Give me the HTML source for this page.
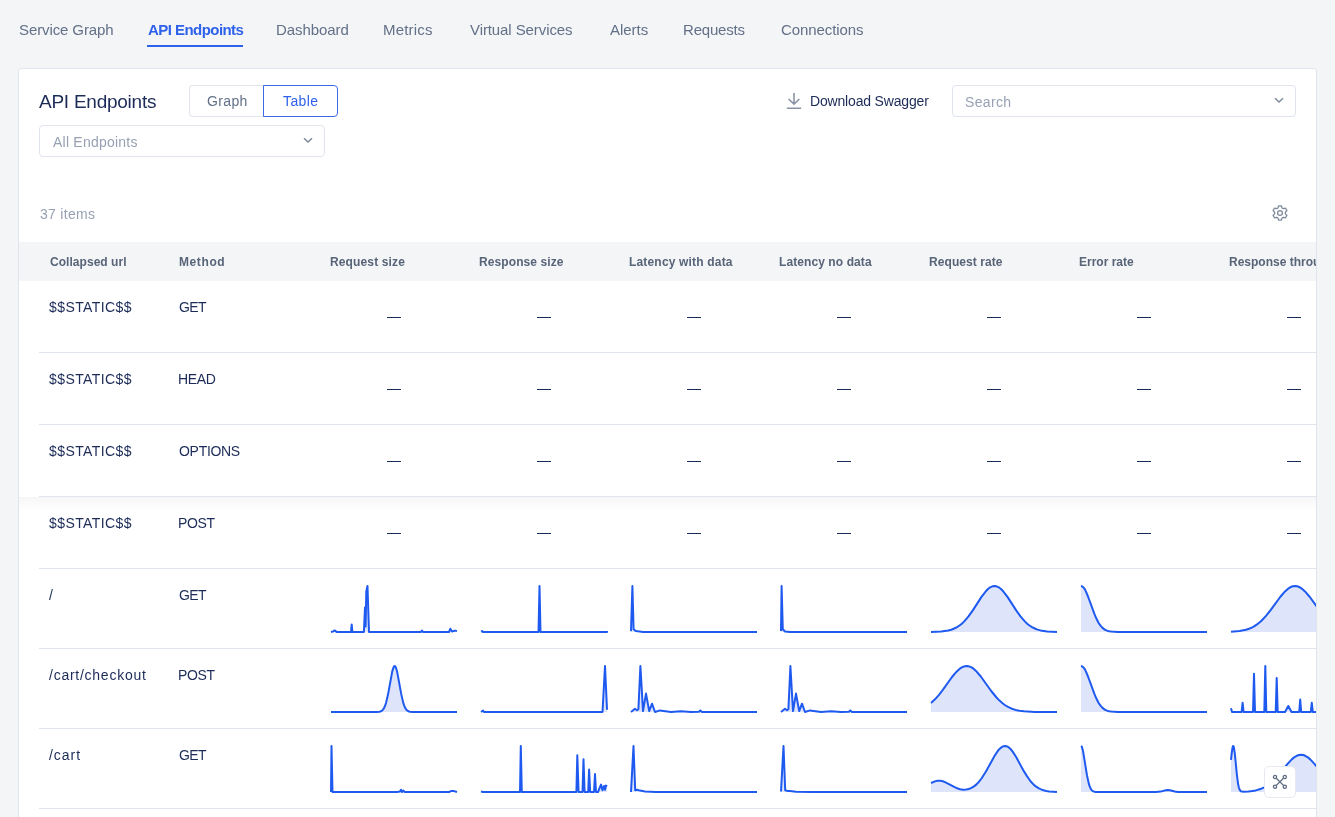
<!DOCTYPE html>
<html><head><meta charset="utf-8"><style>
html,body{margin:0;padding:0;}
body{width:1335px;height:817px;overflow:hidden;background:#f4f5f7;position:relative;font-family:"Liberation Sans", sans-serif;}
.t{position:absolute;white-space:nowrap;will-change:transform;}
.f{fill:#dee5fb;}
.s{fill:none;stroke:#1f5af0;stroke-width:2;stroke-linejoin:round;stroke-linecap:butt;}
</style></head><body>
<div class="t" style="left:19.30px;top:21.10px;font-size:15px;line-height:18px;color:#627088;font-weight:400;letter-spacing:-0.108px;">Service Graph</div>
<div class="t" style="left:147.60px;top:21.10px;font-size:15px;line-height:18px;color:#2f62ea;font-weight:700;letter-spacing:-0.550px;">API Endpoints</div>
<div class="t" style="left:275.80px;top:21.10px;font-size:15px;line-height:18px;color:#627088;font-weight:400;letter-spacing:-0.075px;">Dashboard</div>
<div class="t" style="left:382.90px;top:21.10px;font-size:15px;line-height:18px;color:#627088;font-weight:400;letter-spacing:0.200px;">Metrics</div>
<div class="t" style="left:469.70px;top:21.10px;font-size:15px;line-height:18px;color:#627088;font-weight:400;letter-spacing:-0.093px;">Virtual Services</div>
<div class="t" style="left:610.00px;top:21.10px;font-size:15px;line-height:18px;color:#627088;font-weight:400;letter-spacing:-0.040px;">Alerts</div>
<div class="t" style="left:682.80px;top:21.10px;font-size:15px;line-height:18px;color:#627088;font-weight:400;letter-spacing:-0.200px;">Requests</div>
<div class="t" style="left:780.90px;top:21.10px;font-size:15px;line-height:18px;color:#627088;font-weight:400;letter-spacing:-0.080px;">Connections</div>
<div style="position:absolute;left:147px;top:45px;width:96px;height:2px;background:#2f62ea"></div>
<div style="position:absolute;left:18px;top:68px;width:1297px;height:800px;border:1px solid #e0e4ed;border-radius:3px;background:#fff"></div>
<div class="t" style="left:39.40px;top:90.31px;font-size:19px;line-height:23px;color:#1c2b57;font-weight:400;letter-spacing:-0.250px;">API Endpoints</div>
<div style="position:absolute;left:189px;top:85px;width:74px;height:30px;border:1px solid #e0e4ed;border-right:none;border-radius:4px 0 0 4px;background:#fff"></div>
<div style="position:absolute;left:263px;top:85px;width:73px;height:30px;border:1px solid #3a6ae8;border-radius:0 4px 4px 0;background:#fff"></div>
<div class="t" style="left:206.60px;top:92.65px;font-size:14px;line-height:17px;color:#627088;font-weight:400;letter-spacing:0.375px;">Graph</div>
<div class="t" style="left:283.00px;top:92.65px;font-size:14px;line-height:17px;color:#2f62ea;font-weight:400;letter-spacing:0.375px;">Table</div>
<div style="position:absolute;left:39px;top:125px;width:284px;height:30px;border:1px solid #e0e4ed;border-radius:4px;background:#fff"></div>
<div class="t" style="left:52.60px;top:133.65px;font-size:14px;line-height:17px;color:#97a1b3;font-weight:400;letter-spacing:0.225px;">All Endpoints</div>
<svg style="position:absolute;left:303px;top:137px" width="10" height="7" viewBox="0 0 10 7"><path d="M1 1.2 L5 5 L9 1.2" fill="none" stroke="#7f8a9c" stroke-width="1.5"/></svg>
<svg style="position:absolute;left:784px;top:90px" width="20" height="20" viewBox="0 0 20 20"><path d="M10 3 V14.2 M4.6 9 L10 14.2 L15.4 9 M2.8 18.2 H17.2" fill="none" stroke="#8a94a6" stroke-width="1.6"/></svg>
<div class="t" style="left:809.50px;top:92.65px;font-size:14px;line-height:17px;color:#1c2b57;font-weight:400;letter-spacing:-0.173px;">Download Swagger</div>
<div style="position:absolute;left:952px;top:85px;width:342px;height:30px;border:1px solid #e0e4ed;border-radius:4px;background:#fff"></div>
<div class="t" style="left:965.20px;top:93.65px;font-size:14px;line-height:17px;color:#97a1b3;font-weight:400;letter-spacing:0.340px;">Search</div>
<svg style="position:absolute;left:1274px;top:97px" width="10" height="7" viewBox="0 0 10 7"><path d="M1 1.2 L5 5 L9 1.2" fill="none" stroke="#7f8a9c" stroke-width="1.5"/></svg>
<div class="t" style="left:40.00px;top:205.65px;font-size:14px;line-height:17px;color:#97a1b3;font-weight:400;letter-spacing:0.286px;">37 items</div>
<svg style="position:absolute;left:1270px;top:203px" width="20" height="20" viewBox="1270 203 20 20"><path d="M1278.61 205.83 L1281.39 205.83 L1282.02 207.99 L1283.32 208.74 L1285.51 208.21 L1286.90 210.62 L1285.35 212.25 L1285.35 213.75 L1286.90 215.38 L1285.51 217.79 L1283.32 217.26 L1282.02 218.01 L1281.39 220.17 L1278.61 220.17 L1277.98 218.01 L1276.68 217.26 L1274.49 217.79 L1273.10 215.38 L1274.65 213.75 L1274.65 212.25 L1273.10 210.62 L1274.49 208.21 L1276.68 208.74 L1277.98 207.99 Z" fill="none" stroke="#7f8a9c" stroke-width="1.3" stroke-linejoin="round"/><circle cx="1280" cy="213" r="2.4" fill="none" stroke="#7f8a9c" stroke-width="1.3"/></svg>
<div style="position:absolute;left:19px;top:242px;width:1297px;height:39px;background:#f4f5f7"></div>
<div style="position:absolute;left:0;top:0;width:1316px;height:300px;overflow:hidden">
<div class="t" style="left:49.70px;top:254.84px;font-size:12px;line-height:14px;color:#586478;font-weight:700;letter-spacing:0.042px;">Collapsed url</div>
<div class="t" style="left:179.20px;top:254.84px;font-size:12px;line-height:14px;color:#586478;font-weight:700;letter-spacing:0.600px;">Method</div>
<div class="t" style="left:329.50px;top:254.84px;font-size:12px;line-height:14px;color:#586478;font-weight:700;letter-spacing:0.136px;">Request size</div>
<div class="t" style="left:479.10px;top:254.84px;font-size:12px;line-height:14px;color:#586478;font-weight:700;letter-spacing:0.092px;">Response size</div>
<div class="t" style="left:629.40px;top:254.84px;font-size:12px;line-height:14px;color:#586478;font-weight:700;letter-spacing:0.175px;">Latency with data</div>
<div class="t" style="left:779.10px;top:254.84px;font-size:12px;line-height:14px;color:#586478;font-weight:700;letter-spacing:0.086px;">Latency no data</div>
<div class="t" style="left:929.40px;top:254.84px;font-size:12px;line-height:14px;color:#586478;font-weight:700;letter-spacing:0.073px;">Request rate</div>
<div class="t" style="left:1079.20px;top:254.84px;font-size:12px;line-height:14px;color:#586478;font-weight:700;">Error rate</div>
<div class="t" style="left:1229.30px;top:254.84px;font-size:12px;line-height:14px;color:#586478;font-weight:700;">Response throughput</div>
</div>
<div class="t" style="left:49.00px;top:298.65px;font-size:14px;line-height:17px;color:#1c2b57;font-weight:400;letter-spacing:0.411px;">$$STATIC$$</div>
<div class="t" style="left:179.20px;top:298.65px;font-size:14px;line-height:17px;color:#1c2b57;font-weight:400;letter-spacing:-0.600px;">GET</div>
<div style="position:absolute;left:39px;top:352px;width:1277px;height:1px;background:#e0e4ed"></div>
<div class="t" style="left:49.00px;top:370.65px;font-size:14px;line-height:17px;color:#1c2b57;font-weight:400;letter-spacing:0.411px;">$$STATIC$$</div>
<div class="t" style="left:178.20px;top:370.65px;font-size:14px;line-height:17px;color:#1c2b57;font-weight:400;letter-spacing:-0.333px;">HEAD</div>
<div style="position:absolute;left:39px;top:424px;width:1277px;height:1px;background:#e0e4ed"></div>
<div class="t" style="left:49.00px;top:442.65px;font-size:14px;line-height:17px;color:#1c2b57;font-weight:400;letter-spacing:0.411px;">$$STATIC$$</div>
<div class="t" style="left:179.20px;top:442.65px;font-size:14px;line-height:17px;color:#1c2b57;font-weight:400;letter-spacing:-0.300px;">OPTIONS</div>
<div style="position:absolute;left:39px;top:496px;width:1277px;height:1px;background:#e0e4ed"></div>
<div class="t" style="left:49.00px;top:514.65px;font-size:14px;line-height:17px;color:#1c2b57;font-weight:400;letter-spacing:0.411px;">$$STATIC$$</div>
<div class="t" style="left:178.20px;top:514.65px;font-size:14px;line-height:17px;color:#1c2b57;font-weight:400;letter-spacing:-0.333px;">POST</div>
<div style="position:absolute;left:39px;top:568px;width:1277px;height:1px;background:#e0e4ed"></div>
<div class="t" style="left:49.00px;top:586.65px;font-size:14px;line-height:17px;color:#1c2b57;font-weight:400;">/</div>
<div class="t" style="left:179.20px;top:586.65px;font-size:14px;line-height:17px;color:#1c2b57;font-weight:400;letter-spacing:-0.600px;">GET</div>
<div style="position:absolute;left:39px;top:648px;width:1277px;height:1px;background:#e0e4ed"></div>
<div class="t" style="left:49.00px;top:666.65px;font-size:14px;line-height:17px;color:#1c2b57;font-weight:400;letter-spacing:0.746px;">/cart/checkout</div>
<div class="t" style="left:178.20px;top:666.65px;font-size:14px;line-height:17px;color:#1c2b57;font-weight:400;letter-spacing:-0.333px;">POST</div>
<div style="position:absolute;left:39px;top:728px;width:1277px;height:1px;background:#e0e4ed"></div>
<div class="t" style="left:49.00px;top:746.65px;font-size:14px;line-height:17px;color:#1c2b57;font-weight:400;letter-spacing:0.950px;">/cart</div>
<div class="t" style="left:179.20px;top:746.65px;font-size:14px;line-height:17px;color:#1c2b57;font-weight:400;letter-spacing:-0.600px;">GET</div>
<div style="position:absolute;left:39px;top:808px;width:1277px;height:1px;background:#e0e4ed"></div>
<div style="position:absolute;left:19px;top:497px;width:1297px;height:14px;background:linear-gradient(rgba(0,0,0,0.035),rgba(0,0,0,0))"></div>
<div style="position:absolute;left:387px;top:316.9px;width:14px;height:1.2px;background:#1b2b58"></div>
<div style="position:absolute;left:537px;top:316.9px;width:14px;height:1.2px;background:#1b2b58"></div>
<div style="position:absolute;left:687px;top:316.9px;width:14px;height:1.2px;background:#1b2b58"></div>
<div style="position:absolute;left:837px;top:316.9px;width:14px;height:1.2px;background:#1b2b58"></div>
<div style="position:absolute;left:987px;top:316.9px;width:14px;height:1.2px;background:#1b2b58"></div>
<div style="position:absolute;left:1137px;top:316.9px;width:14px;height:1.2px;background:#1b2b58"></div>
<div style="position:absolute;left:1287px;top:316.9px;width:14px;height:1.2px;background:#1b2b58"></div>
<div style="position:absolute;left:387px;top:388.9px;width:14px;height:1.2px;background:#1b2b58"></div>
<div style="position:absolute;left:537px;top:388.9px;width:14px;height:1.2px;background:#1b2b58"></div>
<div style="position:absolute;left:687px;top:388.9px;width:14px;height:1.2px;background:#1b2b58"></div>
<div style="position:absolute;left:837px;top:388.9px;width:14px;height:1.2px;background:#1b2b58"></div>
<div style="position:absolute;left:987px;top:388.9px;width:14px;height:1.2px;background:#1b2b58"></div>
<div style="position:absolute;left:1137px;top:388.9px;width:14px;height:1.2px;background:#1b2b58"></div>
<div style="position:absolute;left:1287px;top:388.9px;width:14px;height:1.2px;background:#1b2b58"></div>
<div style="position:absolute;left:387px;top:460.9px;width:14px;height:1.2px;background:#1b2b58"></div>
<div style="position:absolute;left:537px;top:460.9px;width:14px;height:1.2px;background:#1b2b58"></div>
<div style="position:absolute;left:687px;top:460.9px;width:14px;height:1.2px;background:#1b2b58"></div>
<div style="position:absolute;left:837px;top:460.9px;width:14px;height:1.2px;background:#1b2b58"></div>
<div style="position:absolute;left:987px;top:460.9px;width:14px;height:1.2px;background:#1b2b58"></div>
<div style="position:absolute;left:1137px;top:460.9px;width:14px;height:1.2px;background:#1b2b58"></div>
<div style="position:absolute;left:1287px;top:460.9px;width:14px;height:1.2px;background:#1b2b58"></div>
<div style="position:absolute;left:387px;top:532.9px;width:14px;height:1.2px;background:#1b2b58"></div>
<div style="position:absolute;left:537px;top:532.9px;width:14px;height:1.2px;background:#1b2b58"></div>
<div style="position:absolute;left:687px;top:532.9px;width:14px;height:1.2px;background:#1b2b58"></div>
<div style="position:absolute;left:837px;top:532.9px;width:14px;height:1.2px;background:#1b2b58"></div>
<div style="position:absolute;left:987px;top:532.9px;width:14px;height:1.2px;background:#1b2b58"></div>
<div style="position:absolute;left:1137px;top:532.9px;width:14px;height:1.2px;background:#1b2b58"></div>
<div style="position:absolute;left:1287px;top:532.9px;width:14px;height:1.2px;background:#1b2b58"></div>
<svg style="position:absolute;left:0;top:0" width="1316" height="817" viewBox="0 0 1316 817"><path d="M331.0 632.0L333.0 631.5L334.6 630.4L336.0 631.5L337.0 632.0L351.0 632.0L351.7 624.4L352.4 632.0L363.9 632.0L365.0 607.6L365.6 626.5L366.3 591.5L367.5 586.0L368.3 611.3L369.0 632.0L421.0 632.0L422.0 630.6L423.0 632.0L449.0 632.0L450.3 628.8L452.0 631.5L455.0 630.6L457.0 631.1L457.0 632.0L331.0 632.0Z" class="f"/><path d="M331.0 632.0L333.0 631.5L334.6 630.4L336.0 631.5L337.0 632.0L351.0 632.0L351.7 624.4L352.4 632.0L363.9 632.0L365.0 607.6L365.6 626.5L366.3 591.5L367.5 586.0L368.3 611.3L369.0 632.0L421.0 632.0L422.0 630.6L423.0 632.0L449.0 632.0L450.3 628.8L452.0 631.5L455.0 630.6L457.0 631.1" class="s"/><path d="M481.0 631.5L482.0 631.1L483.0 632.0L538.5 632.0L539.5 586.0L540.5 632.0L607.0 632.0L607.0 631.1L607.0 632.0L481.0 632.0Z" class="f"/><path d="M481.0 631.5L482.0 631.1L483.0 632.0L538.5 632.0L539.5 586.0L540.5 632.0L607.0 632.0L607.0 631.1" class="s"/><path d="M631.0 631.1L632.4 586.0L633.6 629.2L636.0 631.1L643.0 632.0L757.0 632.0L757.0 632.0L631.0 632.0Z" class="f"/><path d="M631.0 631.1L632.4 586.0L633.6 629.2L636.0 631.1L643.0 632.0L757.0 632.0" class="s"/><path d="M781.0 631.1L781.6 586.0L782.8 629.2L785.0 631.5L790.0 632.0L907.0 632.0L907.0 632.0L781.0 632.0Z" class="f"/><path d="M781.0 631.1L781.6 586.0L782.8 629.2L785.0 631.5L790.0 632.0L907.0 632.0" class="s"/><path d="M931.0 631.9L941.2 631.5L948.2 630.5L951.2 629.7L954.2 628.5L957.0 627.1L959.5 625.5L961.8 623.7L964.0 621.6L968.5 616.4L972.8 610.4L981.5 596.9L985.8 591.3L988.0 589.0L990.2 587.3L992.5 586.3L994.5 586.0L996.5 586.3L998.8 587.3L1001.0 589.0L1003.2 591.3L1007.5 596.9L1016.2 610.4L1020.5 616.4L1025.0 621.6L1027.2 623.7L1029.5 625.5L1032.0 627.1L1034.8 628.5L1037.5 629.6L1040.5 630.4L1047.2 631.5L1057.0 631.9L1057.0 632.0L931.0 632.0Z" class="f"/><path d="M931.0 631.9L941.2 631.5L948.2 630.5L951.2 629.7L954.2 628.5L957.0 627.1L959.5 625.5L961.8 623.7L964.0 621.6L968.5 616.4L972.8 610.4L981.5 596.9L985.8 591.3L988.0 589.0L990.2 587.3L992.5 586.3L994.5 586.0L996.5 586.3L998.8 587.3L1001.0 589.0L1003.2 591.3L1007.5 596.9L1016.2 610.4L1020.5 616.4L1025.0 621.6L1027.2 623.7L1029.5 625.5L1032.0 627.1L1034.8 628.5L1037.5 629.6L1040.5 630.4L1047.2 631.5L1057.0 631.9" class="s"/><path d="M1081.0 586.0L1082.2 586.4L1083.5 587.5L1084.8 589.2L1086.0 591.6L1088.2 597.0L1094.5 614.2L1096.5 618.8L1098.5 622.7L1100.5 625.6L1102.5 627.9L1104.8 629.6L1107.0 630.6L1109.0 631.2L1111.2 631.6L1118.0 632.0L1207.0 632.0L1207.0 632.0L1081.0 632.0Z" class="f"/><path d="M1081.0 586.0L1082.2 586.4L1083.5 587.5L1084.8 589.2L1086.0 591.6L1088.2 597.0L1094.5 614.2L1096.5 618.8L1098.5 622.7L1100.5 625.6L1102.5 627.9L1104.8 629.6L1107.0 630.6L1109.0 631.2L1111.2 631.6L1118.0 632.0L1207.0 632.0" class="s"/><path d="M1231.0 631.7L1239.5 631.0L1246.0 629.7L1249.0 628.7L1251.8 627.6L1254.5 626.1L1257.0 624.4L1261.5 620.7L1266.2 615.6L1270.8 609.9L1280.2 597.0L1285.0 591.4L1287.8 588.9L1290.2 587.3L1292.8 586.3L1295.0 586.0L1297.2 586.3L1299.8 587.3L1302.2 588.9L1305.0 591.4L1309.8 597.0L1319.2 609.9L1323.5 615.3L1328.2 620.4L1332.8 624.3L1335.2 625.9L1337.8 627.3L1340.5 628.5L1343.2 629.5L1349.5 630.9L1357.0 631.6L1357.0 632.0L1231.0 632.0Z" class="f"/><path d="M1231.0 631.7L1239.5 631.0L1246.0 629.7L1249.0 628.7L1251.8 627.6L1254.5 626.1L1257.0 624.4L1261.5 620.7L1266.2 615.6L1270.8 609.9L1280.2 597.0L1285.0 591.4L1287.8 588.9L1290.2 587.3L1292.8 586.3L1295.0 586.0L1297.2 586.3L1299.8 587.3L1302.2 588.9L1305.0 591.4L1309.8 597.0L1319.2 609.9L1323.5 615.3L1328.2 620.4L1332.8 624.3L1335.2 625.9L1337.8 627.3L1340.5 628.5L1343.2 629.5L1349.5 630.9L1357.0 631.6" class="s"/><path d="M331.0 712.0L376.2 712.0L379.5 711.7L380.8 711.3L381.8 710.8L383.0 709.6L384.0 708.2L385.0 706.0L386.0 703.1L388.0 694.6L392.2 671.6L393.5 667.4L394.2 666.2L394.8 666.0L395.2 666.3L396.0 667.7L397.2 672.1L401.2 693.9L403.2 702.6L404.2 705.6L405.2 707.9L406.2 709.5L407.5 710.7L408.5 711.3L409.8 711.7L413.0 712.0L457.0 712.0L457.0 712.0L331.0 712.0Z" class="f"/><path d="M331.0 712.0L376.2 712.0L379.5 711.7L380.8 711.3L381.8 710.8L383.0 709.6L384.0 708.2L385.0 706.0L386.0 703.1L388.0 694.6L392.2 671.6L393.5 667.4L394.2 666.2L394.8 666.0L395.2 666.3L396.0 667.7L397.2 672.1L401.2 693.9L403.2 702.6L404.2 705.6L405.2 707.9L406.2 709.5L407.5 710.7L408.5 711.3L409.8 711.7L413.0 712.0L457.0 712.0" class="s"/><path d="M481.0 712.0L483.0 710.6L484.0 712.0L602.5 712.0L605.0 666.0L607.0 709.7L607.0 712.0L481.0 712.0Z" class="f"/><path d="M481.0 712.0L483.0 710.6L484.0 712.0L602.5 712.0L605.0 666.0L607.0 709.7" class="s"/><path d="M631.0 712.0L635.0 708.8L637.0 710.2L638.4 709.2L640.4 666.0L643.0 711.1L646.0 693.6L649.2 711.1L652.0 703.7L655.0 712.0L660.0 710.4L671.0 712.0L681.0 711.3L691.0 712.0L699.0 711.8L700.3 710.4L702.0 712.0L757.0 712.0L757.0 712.0L631.0 712.0Z" class="f"/><path d="M631.0 712.0L635.0 708.8L637.0 710.2L638.4 709.2L640.4 666.0L643.0 711.1L646.0 693.6L649.2 711.1L652.0 703.7L655.0 712.0L660.0 710.4L671.0 712.0L681.0 711.3L691.0 712.0L699.0 711.8L700.3 710.4L702.0 712.0L757.0 712.0" class="s"/><path d="M781.0 712.0L785.0 708.8L787.0 710.2L788.4 709.2L790.4 666.0L793.0 711.1L796.0 693.6L799.2 711.1L802.0 703.7L805.0 712.0L810.0 710.4L821.0 712.0L831.0 711.3L841.0 712.0L849.0 711.8L850.3 710.4L852.0 712.0L907.0 712.0L907.0 712.0L781.0 712.0Z" class="f"/><path d="M781.0 712.0L785.0 708.8L787.0 710.2L788.4 709.2L790.4 666.0L793.0 711.1L796.0 693.6L799.2 711.1L802.0 703.7L805.0 712.0L810.0 710.4L821.0 712.0L831.0 711.3L841.0 712.0L849.0 711.8L850.3 710.4L852.0 712.0L907.0 712.0" class="s"/><path d="M931.0 703.0L935.0 699.3L939.0 694.8L943.0 689.6L952.0 677.0L954.8 673.6L957.0 671.2L959.8 668.7L962.2 667.1L964.8 666.2L967.2 666.0L969.2 666.4L971.5 667.4L973.8 668.9L976.0 670.9L980.8 676.5L991.2 691.0L996.5 697.5L999.5 700.6L1002.5 703.3L1005.5 705.5L1008.5 707.2L1011.8 708.7L1015.5 709.9L1019.5 710.7L1024.0 711.3L1034.8 711.9L1057.0 712.0L1057.0 712.0L931.0 712.0Z" class="f"/><path d="M931.0 703.0L935.0 699.3L939.0 694.8L943.0 689.6L952.0 677.0L954.8 673.6L957.0 671.2L959.8 668.7L962.2 667.1L964.8 666.2L967.2 666.0L969.2 666.4L971.5 667.4L973.8 668.9L976.0 670.9L980.8 676.5L991.2 691.0L996.5 697.5L999.5 700.6L1002.5 703.3L1005.5 705.5L1008.5 707.2L1011.8 708.7L1015.5 709.9L1019.5 710.7L1024.0 711.3L1034.8 711.9L1057.0 712.0" class="s"/><path d="M1081.0 666.0L1082.2 666.4L1083.5 667.5L1084.8 669.2L1086.0 671.6L1088.2 677.0L1094.5 694.2L1096.5 698.8L1098.5 702.7L1100.5 705.6L1102.5 707.9L1104.8 709.6L1107.0 710.6L1109.0 711.2L1111.2 711.6L1118.0 712.0L1207.0 712.0L1207.0 712.0L1081.0 712.0Z" class="f"/><path d="M1081.0 666.0L1082.2 666.4L1083.5 667.5L1084.8 669.2L1086.0 671.6L1088.2 677.0L1094.5 694.2L1096.5 698.8L1098.5 702.7L1100.5 705.6L1102.5 707.9L1104.8 709.6L1107.0 710.6L1109.0 711.2L1111.2 711.6L1118.0 712.0L1207.0 712.0" class="s"/><path d="M1231.0 708.3L1232.0 712.0L1241.6 712.0L1242.6 702.8L1243.6 712.0L1253.0 712.0L1254.0 673.8L1255.0 712.0L1264.3 712.0L1265.3 666.0L1266.3 712.0L1275.7 712.0L1276.7 678.0L1277.7 712.0L1285.0 712.0L1288.3 706.0L1291.5 712.0L1299.2 712.0L1300.2 699.6L1301.2 712.0L1310.8 712.0L1311.8 702.8L1312.8 712.0L1357.0 712.0L1357.0 712.0L1231.0 712.0Z" class="f"/><path d="M1231.0 708.3L1232.0 712.0L1241.6 712.0L1242.6 702.8L1243.6 712.0L1253.0 712.0L1254.0 673.8L1255.0 712.0L1264.3 712.0L1265.3 666.0L1266.3 712.0L1275.7 712.0L1276.7 678.0L1277.7 712.0L1285.0 712.0L1288.3 706.0L1291.5 712.0L1299.2 712.0L1300.2 699.6L1301.2 712.0L1310.8 712.0L1311.8 702.8L1312.8 712.0L1357.0 712.0" class="s"/><path d="M331.0 792.0L331.5 746.0L332.5 792.0L397.0 792.0L400.0 791.5L401.0 789.7L402.0 792.0L403.5 790.6L404.5 792.0L449.0 792.0L451.0 791.1L454.0 791.1L457.0 792.0L457.0 792.0L331.0 792.0Z" class="f"/><path d="M331.0 792.0L331.5 746.0L332.5 792.0L397.0 792.0L400.0 791.5L401.0 789.7L402.0 792.0L403.5 790.6L404.5 792.0L449.0 792.0L451.0 791.1L454.0 791.1L457.0 792.0" class="s"/><path d="M481.0 791.5L483.0 792.0L520.0 792.0L520.8 746.0L521.8 792.0L576.4 792.0L577.3 755.2L578.6 792.0L582.5 792.0L583.5 759.3L584.6 792.0L588.2 792.0L589.1 769.5L590.2 792.0L594.0 792.0L595.0 774.1L596.0 792.0L598.0 792.0L601.0 784.6L602.5 790.2L604.0 786.0L605.0 789.7L606.0 785.6L607.0 786.5L607.0 792.0L481.0 792.0Z" class="f"/><path d="M481.0 791.5L483.0 792.0L520.0 792.0L520.8 746.0L521.8 792.0L576.4 792.0L577.3 755.2L578.6 792.0L582.5 792.0L583.5 759.3L584.6 792.0L588.2 792.0L589.1 769.5L590.2 792.0L594.0 792.0L595.0 774.1L596.0 792.0L598.0 792.0L601.0 784.6L602.5 790.2L604.0 786.0L605.0 789.7L606.0 785.6L607.0 786.5" class="s"/><path d="M631.0 792.0L633.5 746.0L635.2 790.2L637.0 789.7L640.0 790.6L645.0 791.5L656.0 792.0L757.0 792.0L757.0 792.0L631.0 792.0Z" class="f"/><path d="M631.0 792.0L633.5 746.0L635.2 790.2L637.0 789.7L640.0 790.6L645.0 791.5L656.0 792.0L757.0 792.0" class="s"/><path d="M781.0 791.5L783.5 746.0L785.2 790.2L788.0 791.1L790.0 791.1L796.0 791.8L811.0 792.0L907.0 792.0L907.0 792.0L781.0 792.0Z" class="f"/><path d="M781.0 791.5L783.5 746.0L785.2 790.2L788.0 791.1L790.0 791.1L796.0 791.8L811.0 792.0L907.0 792.0" class="s"/><path d="M931.0 783.0L933.8 781.8L936.0 781.1L938.2 780.8L940.5 780.8L942.8 781.3L945.0 782.1L955.2 787.4L957.8 788.5L960.2 789.2L963.2 789.7L966.0 789.6L968.8 789.0L971.5 787.9L974.0 786.4L976.5 784.4L979.0 781.7L981.5 778.5L985.8 771.8L994.5 756.0L998.2 750.4L1000.0 748.5L1001.8 747.1L1003.5 746.2L1005.2 746.0L1007.0 746.4L1008.8 747.4L1010.5 749.0L1012.5 751.4L1016.0 756.8L1023.2 770.1L1026.8 775.9L1030.5 781.2L1034.2 785.1L1036.2 786.7L1038.5 788.2L1041.0 789.4L1043.5 790.3L1046.2 791.0L1049.2 791.4L1057.0 791.9L1057.0 792.0L931.0 792.0Z" class="f"/><path d="M931.0 783.0L933.8 781.8L936.0 781.1L938.2 780.8L940.5 780.8L942.8 781.3L945.0 782.1L955.2 787.4L957.8 788.5L960.2 789.2L963.2 789.7L966.0 789.6L968.8 789.0L971.5 787.9L974.0 786.4L976.5 784.4L979.0 781.7L981.5 778.5L985.8 771.8L994.5 756.0L998.2 750.4L1000.0 748.5L1001.8 747.1L1003.5 746.2L1005.2 746.0L1007.0 746.4L1008.8 747.4L1010.5 749.0L1012.5 751.4L1016.0 756.8L1023.2 770.1L1026.8 775.9L1030.5 781.2L1034.2 785.1L1036.2 786.7L1038.5 788.2L1041.0 789.4L1043.5 790.3L1046.2 791.0L1049.2 791.4L1057.0 791.9" class="s"/><path d="M1081.0 746.0L1081.5 746.3L1082.0 747.3L1083.0 750.9L1087.0 775.4L1088.8 783.6L1089.8 786.7L1090.8 788.9L1092.0 790.5L1093.5 791.5L1095.2 791.9L1098.5 792.0L1156.0 792.0L1160.5 791.6L1165.8 790.2L1167.8 789.9L1169.8 790.2L1174.8 791.5L1178.0 791.9L1207.0 792.0L1207.0 792.0L1081.0 792.0Z" class="f"/><path d="M1081.0 746.0L1081.5 746.3L1082.0 747.3L1083.0 750.9L1087.0 775.4L1088.8 783.6L1089.8 786.7L1090.8 788.9L1092.0 790.5L1093.5 791.5L1095.2 791.9L1098.5 792.0L1156.0 792.0L1160.5 791.6L1165.8 790.2L1167.8 789.9L1169.8 790.2L1174.8 791.5L1178.0 791.9L1207.0 792.0" class="s"/><path d="M1231.0 759.8L1231.8 752.6L1232.5 747.6L1233.0 746.1L1233.2 746.0L1233.5 746.3L1233.8 747.0L1234.8 753.4L1236.8 773.8L1238.0 783.5L1238.8 787.2L1239.5 789.4L1240.5 791.0L1241.8 791.6L1243.8 791.8L1248.5 791.5L1252.2 791.0L1255.8 790.4L1261.2 788.7L1263.8 787.6L1266.2 786.2L1270.5 783.1L1275.0 778.9L1279.0 774.3L1287.8 763.6L1292.0 759.1L1294.5 757.1L1296.8 755.8L1299.0 755.0L1301.0 754.7L1303.0 755.0L1305.2 755.8L1307.5 757.1L1310.0 759.1L1314.2 763.6L1323.0 774.3L1326.8 778.6L1331.0 782.7L1335.0 785.7L1339.5 788.2L1344.5 790.0L1350.0 791.1L1357.0 791.7L1357.0 792.0L1231.0 792.0Z" class="f"/><path d="M1231.0 759.8L1231.8 752.6L1232.5 747.6L1233.0 746.1L1233.2 746.0L1233.5 746.3L1233.8 747.0L1234.8 753.4L1236.8 773.8L1238.0 783.5L1238.8 787.2L1239.5 789.4L1240.5 791.0L1241.8 791.6L1243.8 791.8L1248.5 791.5L1252.2 791.0L1255.8 790.4L1261.2 788.7L1263.8 787.6L1266.2 786.2L1270.5 783.1L1275.0 778.9L1279.0 774.3L1287.8 763.6L1292.0 759.1L1294.5 757.1L1296.8 755.8L1299.0 755.0L1301.0 754.7L1303.0 755.0L1305.2 755.8L1307.5 757.1L1310.0 759.1L1314.2 763.6L1323.0 774.3L1326.8 778.6L1331.0 782.7L1335.0 785.7L1339.5 788.2L1344.5 790.0L1350.0 791.1L1357.0 791.7" class="s"/></svg>
<div style="position:absolute;left:1264px;top:766px;width:30px;height:30px;border:1px solid #e6e9ef;border-radius:5px;background:#fff"></div>
<svg style="position:absolute;left:1269px;top:771px" width="22" height="22" viewBox="0 0 22 22"><g fill="none" stroke="#5d6a80" stroke-width="1.3"><circle cx="6" cy="6" r="1.6"/><circle cx="15.8" cy="6" r="1.6"/><circle cx="6" cy="15.7" r="1.6"/><circle cx="15.8" cy="15.7" r="1.6"/><path d="M7.3 7.3 L14.5 14.4 M14.5 7.3 L7.3 14.4"/></g></svg>
</body></html>
